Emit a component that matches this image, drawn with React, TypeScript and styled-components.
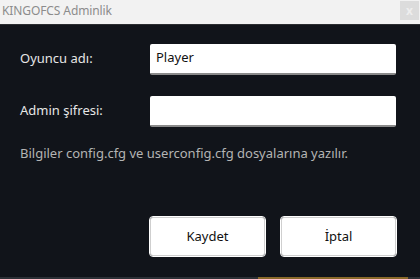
import React from "react";
import styled, { createGlobalStyle } from "styled-components";

const Global = createGlobalStyle`
  html, body { margin: 0; padding: 0; background: #11141a; }
  body { width: 420px; height: 279px; overflow: hidden; font-family: "Noto Sans", "Open Sans", sans-serif; }
  #root { width: 420px; height: 279px; }
`;

const Window = styled.div`
  width: 420px;
  height: 279px;
  display: flex;
  flex-direction: column;
  background: #11141a;
`;

const TitleBar = styled.div`
  height: 25px;
  box-sizing: border-box;
  background: #f2f2f2;
  border-bottom: 1px solid #2b2d31;
  display: flex;
  align-items: flex-start;
  justify-content: space-between;
`;

const Title = styled.span`
  font-size: 12px;
  color: #8c8c8c;
  padding-left: 2px;
  line-height: 21px;
  letter-spacing: -0.1px;
`;

const CloseButton = styled.div`
  width: 19px;
  height: 19px;
  margin: 1px 1px 0 0;
  background: #dcdcdc;
  color: #eeeeee;
  font-size: 12px;
  font-weight: bold;
  display: flex;
  align-items: center;
  justify-content: center;
`;

const Body = styled.div`
  flex: 1;
  display: flex;
  flex-direction: column;
  padding: 19px 24px 0 20px;
`;

const Row = styled.div<{ $gap?: number }>`
  display: flex;
  align-items: center;
  height: 31px;
  margin-bottom: ${(p) => p.$gap ?? 0}px;
`;

const Label = styled.label`
  width: 130px;
  font-size: 13px;
  color: #e6e6e6;
  margin-top: -3px;
`;

const Input = styled.div`
  width: 246px;
  height: 31px;
  box-sizing: border-box;
  background: #ffffff;
  border-radius: 2px;
  border-bottom: 2px solid #8a8a8a;
  font-size: 13px;
  color: #111;
  padding: 0 0 3px 6px;
  display: flex;
  align-items: center;
`;

const Info = styled.p`
  margin: 17px 0 0 0;
  font-size: 13px;
  color: #b4b4b4;
`;

const Actions = styled.div`
  display: flex;
  justify-content: flex-end;
  gap: 16px;
  margin-top: 55px;
`;

const Button = styled.button`
  width: 115px;
  height: 39px;
  box-sizing: border-box;
  background: #ffffff;
  border: 1px solid #cfcfcf;
  outline: 1px solid #ffffff;
  border-radius: 3px;
  font-family: "Noto Sans", "Open Sans", sans-serif;
  font-size: 13px;
  color: #111;
  padding: 0 0 2px 0;
`;

const BottomStrip = styled.div`
  height: 2px;
  display: flex;
  background: #2c3036;
`;

const Accent = styled.div`
  width: 150px;
  margin-left: 258px;
  background: #8a6a2a;
`;

export default function App() {
  return (
    <>
      <Global />
      <Window>
        <TitleBar>
          <Title>KINGOFCS Adminlik</Title>
          <CloseButton>x</CloseButton>
        </TitleBar>
        <Body>
          <Row $gap={21}>
            <Label>Oyuncu adı:</Label>
            <Input>Player</Input>
          </Row>
          <Row>
            <Label>Admin şifresi:</Label>
            <Input />
          </Row>
          <Info>Bilgiler config.cfg ve userconfig.cfg dosyalarına yazılır.</Info>
          <Actions>
            <Button>Kaydet</Button>
            <Button>İptal</Button>
          </Actions>
        </Body>
        <BottomStrip>
          <Accent />
        </BottomStrip>
      </Window>
    </>
  );
}
